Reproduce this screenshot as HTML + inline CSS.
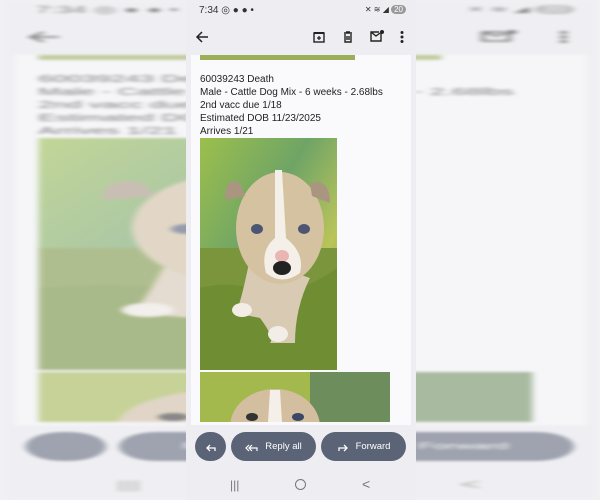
<!DOCTYPE html>
<html><head><style>
*{margin:0;padding:0;box-sizing:border-box}
body{width:600px;height:500px;overflow:hidden;background:#f2f2f5;font-family:"Liberation Sans",Roboto,sans-serif;position:relative}
.scr{position:absolute;top:0;left:186px;width:230px;height:500px;background:#eeeef2;overflow:hidden}
.bgw{position:absolute;top:0;left:186px;width:230px;height:500px;transform:scaleX(2.6);transform-origin:115px 0;filter:blur(1.3px);opacity:.55}
.bgw .scr{left:0}
.sb{position:absolute;top:0;left:0;width:230px;height:22px;font-size:10px;color:#333}
.tb{position:absolute;top:22px;left:0;width:230px;height:33px}
.card{position:absolute;top:55px;left:5px;width:220px;height:370px;background:#fafafd;overflow:hidden}
.txt{position:absolute;left:9px;top:18px;font-size:10px;line-height:13px;color:#222}
.btn{position:absolute;top:432px;height:29px;border-radius:15px;background:#5b6376;color:#fff;font-size:9.5px;display:flex;align-items:center;justify-content:center;gap:7px}
.nav{position:absolute;top:478px;color:#777;font-size:12px}
</style></head><body>
<svg width="0" height="0" style="position:absolute">
<defs>
<linearGradient id="g1" x1="0" y1="0" x2="1" y2="1"><stop offset="0" stop-color="#9cbf4c"/><stop offset=".4" stop-color="#6fa466"/><stop offset=".7" stop-color="#b9c45a"/><stop offset="1" stop-color="#8aa440"/></linearGradient>
<symbol id="pup1" viewBox="0 0 137 232">
<rect width="137" height="232" fill="url(#g1)"/>
<rect y="110" width="137" height="122" fill="#7a953c"/>
<path d="M0 150 Q40 140 70 160 Q110 150 137 130 L137 232 L0 232Z" fill="#6f8d33"/>
<path d="M50 120 Q40 170 35 175 L60 180 Q75 200 70 205 L95 205 Q95 170 110 140Z" fill="#d9cbb3"/>
<ellipse cx="80" cy="90" rx="44" ry="56" fill="#d5c2a0"/>
<path d="M40 45 Q25 38 25 62 L45 58Z" fill="#a99580"/>
<path d="M110 45 Q130 40 130 65 L112 58Z" fill="#a99580"/>
<path d="M75 32 L82 32 L86 100 Q105 115 100 135 Q82 148 66 135 Q60 112 75 100Z" fill="#f4efe8"/>
<ellipse cx="57" cy="91" rx="6" ry="5" fill="#4c5573"/>
<ellipse cx="104" cy="91" rx="6" ry="5" fill="#4c5573"/>
<ellipse cx="82" cy="118" rx="7" ry="6" fill="#e9b6b3"/>
<ellipse cx="82" cy="130" rx="9" ry="7" fill="#222"/>
<ellipse cx="42" cy="172" rx="10" ry="7" fill="#f2ede6"/>
<ellipse cx="78" cy="196" rx="10" ry="8" fill="#f2ede6"/>
</symbol>
<symbol id="pup2" viewBox="0 0 190 50">
<rect width="190" height="50" fill="#a3b94d"/>
<rect x="110" width="80" height="50" fill="#6d8e5c"/>
<ellipse cx="75" cy="55" rx="45" ry="38" fill="#d3bfa0"/>
<path d="M70 18 L80 18 L82 50 L68 50Z" fill="#f4efe8"/>
<ellipse cx="52" cy="45" rx="6" ry="4" fill="#333"/>
<ellipse cx="98" cy="45" rx="6" ry="4" fill="#3b4766"/>
</symbol>
<symbol id="content" viewBox="0 0 230 500">
</symbol>
</defs></svg>

<div class="bgw"><div class="scr">
<div class="sb"><span style="position:absolute;left:13px;top:5px">7:34 ◎ ● ● •</span><span style="position:absolute;right:10px;top:5px;font-size:8px">✕ ≋ ◢ <span style="background:#999;color:#fff;border-radius:5px;padding:0 3px">20</span></span></div>
<div class="tb">
<svg style="position:absolute;left:9px;top:8px" width="14" height="14" viewBox="0 0 14 14"><path d="M13 7H2M7 2L2 7l5 5" stroke="#222" stroke-width="1.5" fill="none"/></svg>
<svg style="position:absolute;left:183px;top:7px" width="16" height="14" viewBox="0 0 16 14"><path d="M12 4v8H2V3h8M2 3l5 4 4-3" stroke="#222" stroke-width="1.4" fill="none"/><circle cx="13" cy="3" r="2" fill="#222"/></svg>
<svg style="position:absolute;left:213px;top:8px" width="6" height="14"><circle cx="3" cy="2.5" r="1.5" fill="#222"/><circle cx="3" cy="7" r="1.5" fill="#222"/><circle cx="3" cy="11.5" r="1.5" fill="#222"/></svg>
</div>
<div class="card">
<div style="position:absolute;left:9px;top:0;width:155px;height:5px;background:#9cae5a"></div>
<div class="txt">60039243 Death<br>Male - Cattle Dog Mix - 6 weeks - 2.68lbs<br>2nd vacc due 1/18<br>Estimated DOB 11/23/2025<br>Arrives 1/21</div>
<svg style="position:absolute;left:9px;top:83px" width="137" height="232"><use href="#pup1"/></svg>
<svg style="position:absolute;left:9px;top:317px" width="190" height="50"><use href="#pup2"/></svg>
</div>
<div class="btn" style="left:9px;width:31px"></div>
<div class="btn" style="left:45px;width:85px">Reply all</div>
<div class="btn" style="left:135px;width:85px">Forward</div>
<div class="nav" style="left:44px">|||</div>
<div class="nav" style="left:176px;top:476px;font-size:14px">&lt;</div>
</div></div>

<div class="scr">
<div class="sb"><span style="position:absolute;left:13px;top:5px">7:34 ◎ ● ● •</span><span style="position:absolute;right:10px;top:5px;font-size:8px">✕ ≋ ◢ <span style="background:#999;color:#fff;border-radius:5px;padding:0 3px">20</span></span></div>
<div class="tb">
<svg style="position:absolute;left:9px;top:8px" width="14" height="14" viewBox="0 0 14 14"><path d="M13 7H2M7 2L2 7l5 5" stroke="#222" stroke-width="1.5" fill="none"/></svg>
<svg style="position:absolute;left:126px;top:8px" width="14" height="14" viewBox="0 0 14 14"><rect x="2" y="3" width="10" height="9" fill="none" stroke="#222" stroke-width="1.4"/><rect x="2" y="2" width="10" height="2" fill="#222"/><path d="M7 6v4M5 8h4" stroke="#222" stroke-width="1.3"/></svg>
<svg style="position:absolute;left:155px;top:8px" width="14" height="14" viewBox="0 0 14 14"><path d="M3 3h8M5 2h4M4 4v8h6V4M6 6v4M8 6v4" stroke="#222" stroke-width="1.4" fill="none"/></svg>
<svg style="position:absolute;left:183px;top:7px" width="16" height="14" viewBox="0 0 16 14"><path d="M12 4v8H2V3h8M2 3l5 4 4-3" stroke="#222" stroke-width="1.4" fill="none"/><circle cx="13" cy="3" r="2" fill="#222"/></svg>
<svg style="position:absolute;left:213px;top:8px" width="6" height="14"><circle cx="3" cy="2.5" r="1.5" fill="#222"/><circle cx="3" cy="7" r="1.5" fill="#222"/><circle cx="3" cy="11.5" r="1.5" fill="#222"/></svg>
</div>
<div class="card">
<div style="position:absolute;left:9px;top:0;width:155px;height:5px;background:#9cae5a"></div>
<div class="txt">60039243 Death<br>Male - Cattle Dog Mix - 6 weeks - 2.68lbs<br>2nd vacc due 1/18<br>Estimated DOB 11/23/2025<br>Arrives 1/21</div>
<svg style="position:absolute;left:9px;top:83px" width="137" height="232"><use href="#pup1"/></svg>
<svg style="position:absolute;left:9px;top:317px" width="190" height="50"><use href="#pup2"/></svg>
</div>
<div class="btn" style="left:9px;width:31px"><svg width="12" height="10" viewBox="0 0 12 10"><path d="M10 9V6H2M5 3L2 6l3 3" stroke="#fff" stroke-width="1.3" fill="none"/></svg></div>
<div class="btn" style="left:45px;width:85px"><svg width="13" height="10" viewBox="0 0 13 10"><path d="M12 9V6H5M7 3L4 6l3 3M4 3L1 6l3 3" stroke="#fff" stroke-width="1.2" fill="none"/></svg>Reply all</div>
<div class="btn" style="left:135px;width:85px"><svg width="12" height="10" viewBox="0 0 12 10"><path d="M2 9V6h8M7 3l3 3-3 3" stroke="#fff" stroke-width="1.3" fill="none"/></svg>Forward</div>
<div class="nav" style="left:44px">|||</div>
<div class="nav" style="left:109px;top:479px;width:11px;height:11px;border:1.3px solid #777;border-radius:50%"></div>
<div class="nav" style="left:176px;top:476px;font-size:14px">&lt;</div>
</div>
</body></html>
